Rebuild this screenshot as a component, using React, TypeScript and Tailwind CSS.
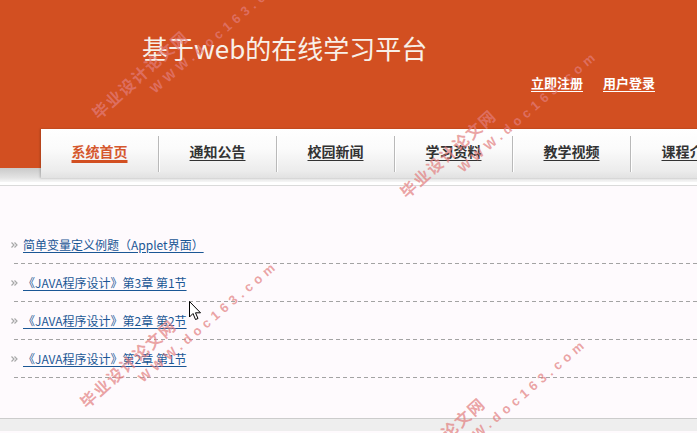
import React from "react";

const navItems = ["系统首页", "通知公告", "校园新闻", "学习资料", "教学视频", "课程介绍"];
const items = [
  "简单变量定义例题（Applet界面）",
  "《JAVA程序设计》第3章 第1节",
  "《JAVA程序设计》第2章 第2节",
  "《JAVA程序设计》第2章 第1节",
];

function Watermark({ x, y }: { x: number; y: number }) {
  return (
    <>
      <div
        className="pointer-events-none absolute origin-left rotate-[-42deg] whitespace-nowrap text-[16px] font-bold leading-[16px] tracking-[1.5px] text-[rgba(226,125,125,0.7)]"
        style={{ left: x, top: y - 8 }}
      >
        毕业设计论文网
      </div>
      <div
        className="pointer-events-none absolute origin-left rotate-[-40.5deg] whitespace-nowrap text-[13px] font-bold leading-[13px] tracking-[4.6px] text-[rgba(226,125,125,0.7)] [font-family:'Liberation_Sans',sans-serif]"
        style={{ left: x + 58, top: y - 25 - 6 }}
      >
        WWW.doc163.com
      </div>
    </>
  );
}

export default function App() {
  return (
    <div className="relative h-[433px] w-[697px] overflow-hidden bg-[#fefafd] [font-family:'Noto_Sans_CJK_SC','Noto_Sans',sans-serif]">
      {/* header */}
      <div className="flex h-[129px] flex-col bg-[#d24f21] pt-[35px]">
        <div className="pl-[142px] text-[26px] leading-[26px] text-[#f8f0e8]">基于web的在线学习平台</div>
        <div className="mt-[15px] flex justify-end gap-[20px] pr-[42px] text-[13px] font-bold leading-[14px] text-white">
          <span className="underline underline-offset-[3px]">立即注册</span>
          <span className="underline underline-offset-[3px]">用户登录</span>
        </div>
      </div>

      {/* nav row */}
      <div className="flex h-[49px]">
        <div className="flex w-[41px] shrink-0 flex-col">
          <div className="h-[39px] bg-[#d24f21]" />
          <div className="h-[10px] bg-[linear-gradient(to_bottom,#cacaca,#e4e4e4)]" />
        </div>
        <div className="flex flex-1 bg-[linear-gradient(to_bottom,#ffffff_0%,#fbfbfb_40%,#ececec_85%,#e2e2e2_100%)] shadow-[-1px_0_2px_rgba(0,0,0,0.2)]">
          {navItems.map((t, i) => (
            <React.Fragment key={t}>
              {i > 0 && <div className="mt-[7px] h-[36px] w-px shrink-0 bg-[#b9b9b9] shadow-[1px_0_0_#ffffff]" />}
              <div className="flex w-[117px] shrink-0 justify-center pt-[14px]">
                {i === 0 ? (
                  <span className="text-[14px] font-bold leading-[16px] text-[#d5582e] underline decoration-[#d24f21] decoration-[3px] underline-offset-[3px]">
                    {t}
                  </span>
                ) : (
                  <span className="whitespace-nowrap text-[14px] font-bold leading-[16px] text-[#333333] underline underline-offset-[3px]">
                    {t}
                  </span>
                )}
              </div>
            </React.Fragment>
          ))}
        </div>
      </div>
      <div className="h-[4px] bg-[linear-gradient(to_bottom,#e4e4e4,#f6f6f6)]" />
      <div className="h-[4px] border-b border-[#dadada] bg-white" />

      {/* content */}
      <div className="h-[232px] pl-[14px] pt-[40px]">
        {items.map((t) => (
          <div key={t} className="flex h-[38px] flex-col">
            <div className="flex h-[37px] items-center">
              <svg width="7" height="6" viewBox="0 0 7 6" className="ml-[-3px] mr-[5px] shrink-0">
                <path d="M0.5 0.5 L3 3 L0.5 5.5 M3.5 0.5 L6 3 L3.5 5.5" stroke="#a8a8a8" strokeWidth="1.2" fill="none" />
              </svg>
              <span className="whitespace-nowrap text-[12px] leading-[14px] text-[#1b5795] underline underline-offset-[2px]">{t}</span>
            </div>
            <div className="h-px bg-[linear-gradient(to_right,#a3a3a3_4px,transparent_4px)] bg-[length:7px_1px] bg-repeat-x" />
          </div>
        ))}
      </div>

      {/* footer */}
      <div className="h-[13px] border-t border-[#cccccc] bg-[#eeeeee]" />

      <Watermark x={94} y={115} />
      <Watermark x={402} y={194} />
      <Watermark x={82} y={404} />
      <Watermark x={391} y={482} />

      {/* cursor */}
      <svg width="13" height="20" viewBox="0 0 13 20" className="pointer-events-none absolute left-[189px] top-[301px]">
        <path d="M0.5 0.5 L0.5 16 L4 12.5 L6.5 18.5 L9 17.5 L6.5 11.8 L11.5 11.8 Z" fill="#ffffff" stroke="#000000" strokeWidth="1" />
      </svg>
    </div>
  );
}
